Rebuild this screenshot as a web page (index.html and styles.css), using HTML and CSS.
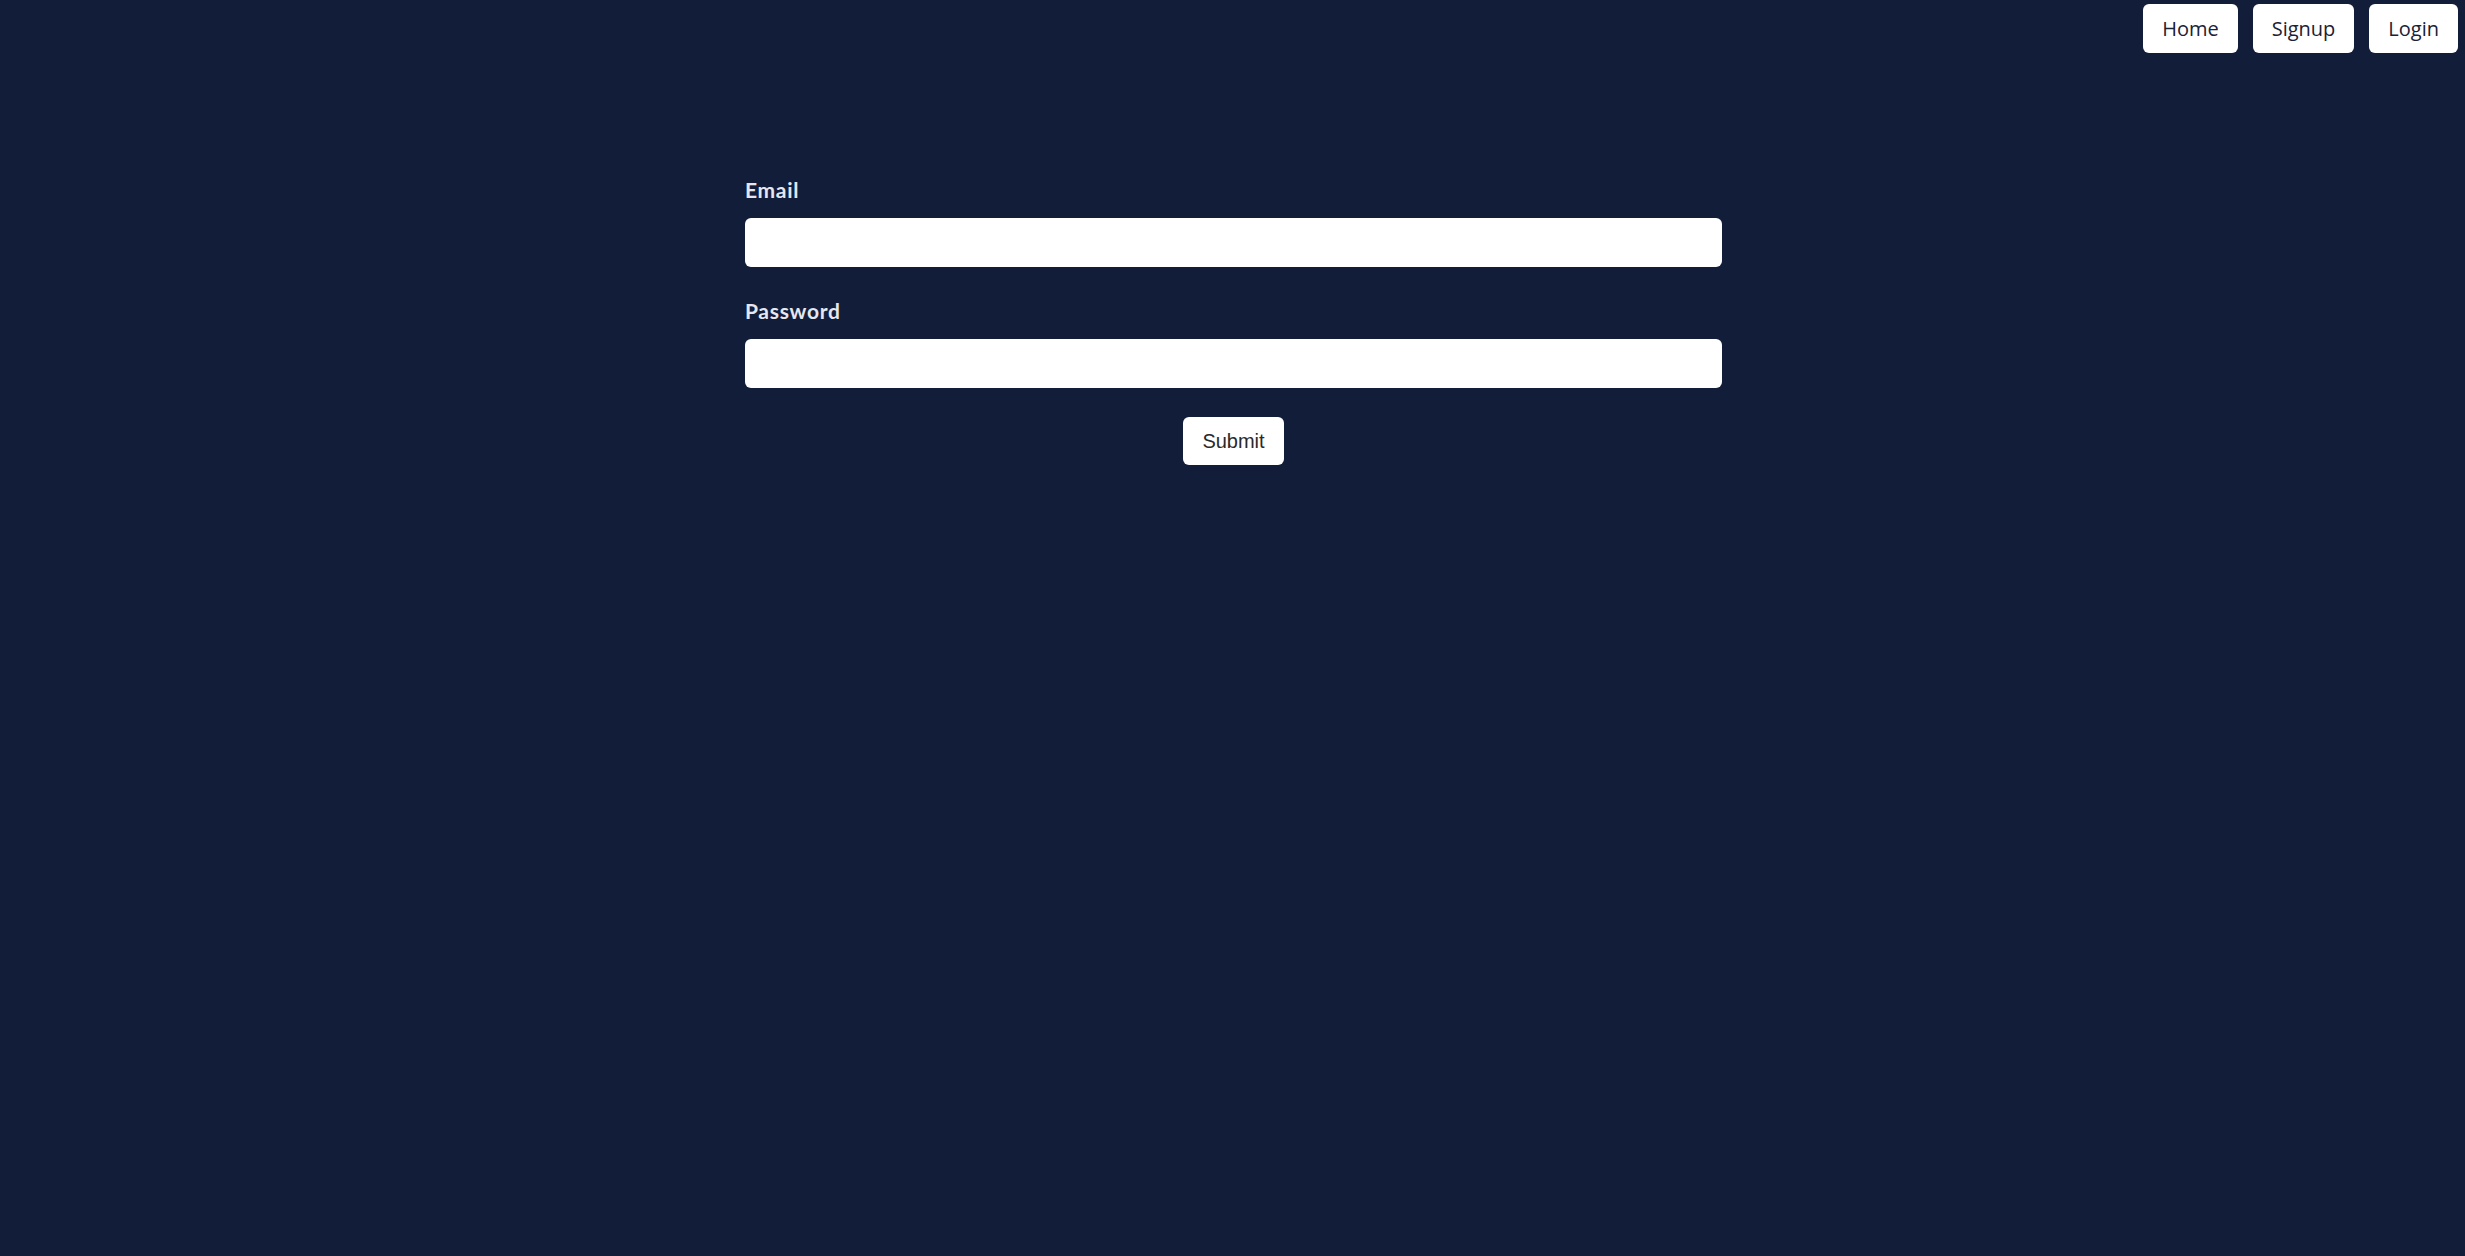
FILE: index.html
```html
<!DOCTYPE html>
<html lang="en">
<head>
<meta charset="utf-8">
<title>Login</title>
<link rel="stylesheet" href="styles.css">
</head>
<body>
<nav class="nav">
  <a class="nav-btn" href="#">Home</a>
  <a class="nav-btn" href="#">Signup</a>
  <a class="nav-btn" href="#">Login</a>
</nav>
<main class="main">
  <form class="form">
    <div class="field">
      <label class="label" for="email">Email</label>
      <input class="input" id="email" type="email">
    </div>
    <div class="field">
      <label class="label" for="password">Password</label>
      <input class="input" id="password" type="password">
    </div>
    <div class="actions">
      <button class="submit" type="button">Submit</button>
    </div>
  </form>
</main>
</body>
</html>
```
FILE: styles.css
```css
html, body {
  margin: 0;
  padding: 0;
}
body {
  background: #121d39;
  min-height: 1256px;
  font-family: "Open Sans", "Noto Sans", sans-serif;
}
.nav {
  display: flex;
  justify-content: flex-end;
  gap: 15px;
  padding: 4px 7px 0 0;
}
.nav-btn {
  display: flex;
  align-items: center;
  height: 49px;
  box-sizing: border-box;
  padding: 0 19px;
  background: #ffffff;
  border-radius: 6px;
  color: #1a2236;
  font-size: 20px;
  font-weight: 500;
  text-decoration: none;
}
.main {
  display: flex;
  justify-content: center;
  padding-top: 124px;
  padding-left: 2px;
}
.form {
  width: 977px;
  display: flex;
  flex-direction: column;
  gap: 31px;
}
.field {
  display: flex;
  flex-direction: column;
}
.label {
  font-family: "Lato", sans-serif;
  font-weight: 700;
  font-size: 21px;
  line-height: 25px;
  letter-spacing: 0.7px;
  color: #e6e6ee;
  margin-bottom: 16px;
}
.input {
  height: 49px;
  box-sizing: border-box;
  border: none;
  border-radius: 6px;
  background: #ffffff;
  margin: 0;
  padding: 0 12px;
}
.actions {
  display: flex;
  justify-content: center;
  margin-top: -2px;
}
.submit {
  height: 48px;
  box-sizing: border-box;
  padding: 0 19px;
  border: none;
  border-radius: 6px;
  background: #ffffff;
  color: #2a2a2a;
  font-family: "Liberation Sans", Arial, sans-serif;
  font-size: 20px;
}
```
